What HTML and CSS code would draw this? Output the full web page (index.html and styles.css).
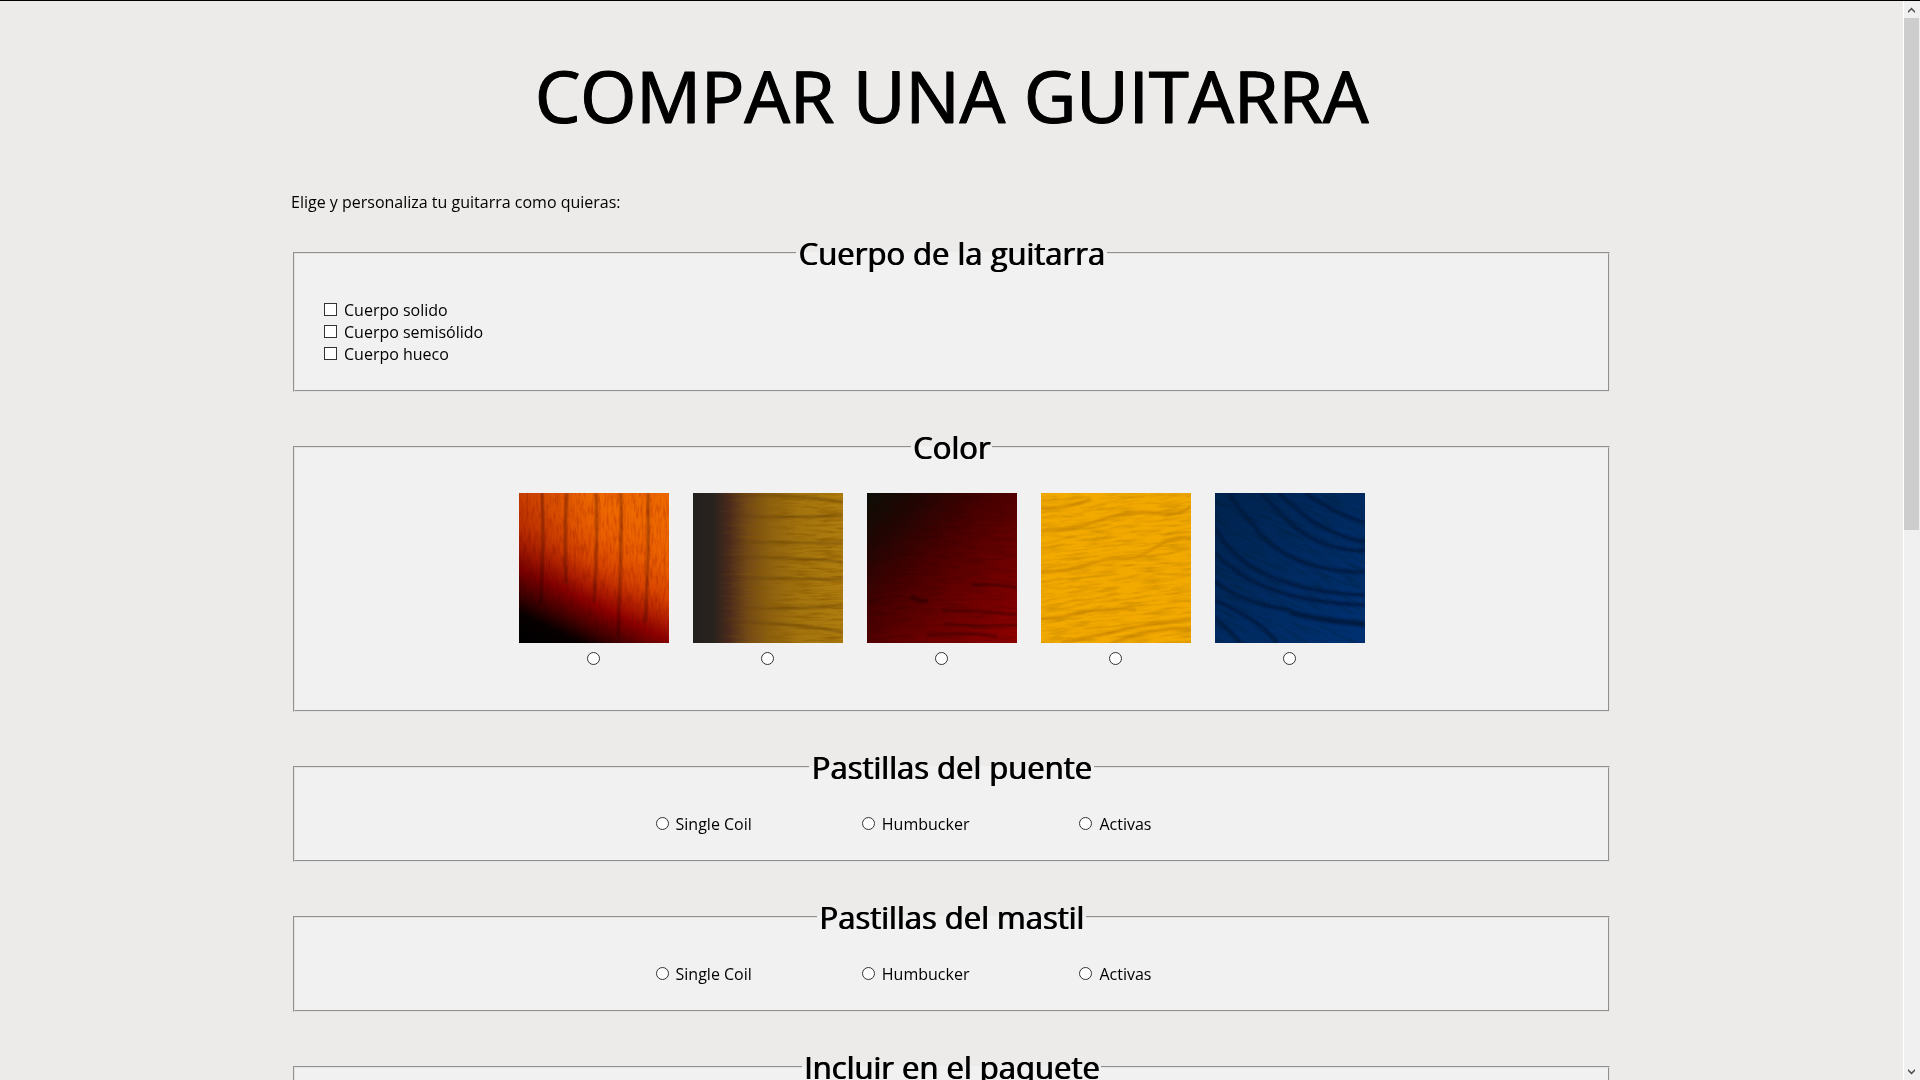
FILE: index.html
```html
<!DOCTYPE html>
<html lang="es">
<head>
<meta charset="utf-8">
<title>Comprar una guitarra</title>
<link rel="stylesheet" href="styles.css">
</head>
<body>
<main class="page">
  <form class="content">
    <h1 class="title">COMPAR UNA GUITARRA</h1>
    <p class="intro">Elige y personaliza tu guitarra como quieras:</p>

    <fieldset class="group">
      <legend>Cuerpo de la guitarra</legend>
      <div class="stack">
        <label class="option"><input type="checkbox" name="cuerpo">Cuerpo solido</label>
        <label class="option"><input type="checkbox" name="cuerpo">Cuerpo semisólido</label>
        <label class="option"><input type="checkbox" name="cuerpo">Cuerpo hueco</label>
      </div>
    </fieldset>

    <fieldset class="group">
      <legend>Color</legend>
      <div class="swatches">
        <label class="swatch">
          <svg viewBox="0 0 150 150" role="img" aria-label="Naranja">
            <defs>
              <linearGradient id="sunburst" gradientUnits="userSpaceOnUse" x1="15" y1="148" x2="82" y2="8">
                <stop offset="0" stop-color="#000"/><stop offset=".12" stop-color="#080000"/><stop offset=".24" stop-color="#4a0000"/><stop offset=".38" stop-color="#8e0000"/><stop offset=".48" stop-color="#b01c00"/><stop offset=".62" stop-color="#d84400"/><stop offset=".8" stop-color="#ea5e00"/><stop offset="1" stop-color="#ee6800"/>
              </linearGradient>
              <linearGradient id="sunburst-side"><stop offset="0" stop-color="#a01800" stop-opacity=".4"/><stop offset=".5" stop-color="#a01800" stop-opacity="0"/></linearGradient>
              <filter id="grain-v" x="0" y="0" width="1" height="1"><feTurbulence type="fractalNoise" baseFrequency=".4 .08" numOctaves="3" seed="4"/><feColorMatrix values="0 0 0 0 .25  0 0 0 0 0  0 0 0 0 0  2 0 0 0 -.85"/></filter>
              <filter id="soft"><feGaussianBlur stdDeviation="1.1"/></filter>
            </defs>
            <rect width="150" height="150" fill="url(#sunburst)"/>
            <rect class="grain" width="150" height="150" fill="url(#sunburst-side)"/>
            <rect class="grain" width="150" height="150" filter="url(#grain-v)" opacity=".3"/>
            <g class="grain" fill="none" stroke="#3a0800" stroke-width="2" filter="url(#soft)" opacity=".5"><path d="M23 0Q25 40 22 110M48 0Q45 50 47 90M77 0Q79 40 75 110M102 0Q103 45 99 145M129 0Q130 70 126 130"/></g>
          </svg>
          <input type="radio" name="color">
        </label>
        <label class="swatch">
          <svg viewBox="0 0 150 150" role="img" aria-label="Ámbar">
            <defs>
              <linearGradient id="amber"><stop offset="0" stop-color="#22211e"/><stop offset=".13" stop-color="#28221e"/><stop offset=".24" stop-color="#49291c"/><stop offset=".36" stop-color="#714817"/><stop offset=".5" stop-color="#8c6010"/><stop offset=".7" stop-color="#a3740e"/><stop offset="1" stop-color="#b07e0f"/></linearGradient>
              <linearGradient id="fade-left"><stop offset=".15" stop-color="#000"/><stop offset=".6" stop-color="#fff"/></linearGradient>
              <mask id="right-only"><rect width="150" height="150" fill="url(#fade-left)"/></mask>
              <filter id="grain-h" x="0" y="0" width="1" height="1"><feTurbulence type="fractalNoise" baseFrequency=".04 .35" numOctaves="4" seed="8"/><feColorMatrix values="0 0 0 0 .25  0 0 0 0 .1  0 0 0 0 0  2.4 0 0 0 -1"/></filter>
            </defs>
            <rect width="150" height="150" fill="url(#amber)"/>
            <g mask="url(#right-only)">
              <rect width="150" height="150" filter="url(#grain-h)" opacity=".7"/>
              <g fill="none" stroke="#50300a" stroke-width="1.4" filter="url(#soft)" opacity=".6"><path d="M20 3Q100 0 150 9M20 22Q90 26 150 22M40 49L150 50M30 65Q90 63 150 69M25 84Q90 86 150 86M30 114Q80 118 150 112M40 129Q100 130 150 139"/></g>
            </g>
          </svg>
          <input type="radio" name="color">
        </label>
        <label class="swatch">
          <svg viewBox="0 0 150 150" role="img" aria-label="Cereza">
            <defs>
              <linearGradient id="cherry" x1="0" y1="0" x2="1" y2="1"><stop offset="0" stop-color="#0c0e06"/><stop offset=".2" stop-color="#230503"/><stop offset=".42" stop-color="#480000"/><stop offset=".65" stop-color="#680000"/><stop offset="1" stop-color="#920000"/></linearGradient>
            </defs>
            <rect width="150" height="150" fill="url(#cherry)"/>
            <rect class="grain" width="150" height="150" filter="url(#grain-h)" opacity=".3"/>
            <g fill="none" stroke="#230000" stroke-width="2" filter="url(#soft)" opacity=".55"><path d="M44 104Q52 109 61 108" stroke-width="4"/><path d="M105 92Q130 90 150 95M75 118Q110 117 150 122M78 131Q110 134 150 132M60 142Q105 138 130 144"/></g>
          </svg>
          <input type="radio" name="color">
        </label>
        <label class="swatch">
          <svg viewBox="0 0 150 150" role="img" aria-label="Amarillo">
            <rect width="150" height="150" fill="#f2a900"/>
            <g transform="rotate(-6 75 75)"><rect x="-15" y="-15" width="180" height="180" filter="url(#grain-h)" opacity=".28"/></g>
            <g fill="none" stroke="#b87500" stroke-width="2" filter="url(#soft)" opacity=".65"><path d="M0 38Q30 38 60 27T115 20T150 13M0 79Q25 79 45 72T80 66T115 54T150 46M0 126Q25 124 45 119T95 117M20 149Q60 142 80 137T150 126M70 150Q110 135 150 135M0 15Q20 18 50 6"/></g>
          </svg>
          <input type="radio" name="color">
        </label>
        <label class="swatch">
          <svg viewBox="0 0 150 150" role="img" aria-label="Azul">
            <defs><linearGradient id="navy" x1="0" y1="0" x2="1" y2="1"><stop offset="0" stop-color="#00234f"/><stop offset="1" stop-color="#003173"/></linearGradient></defs>
            <rect width="150" height="150" fill="url(#navy)"/>
            <g class="grain" transform="rotate(25 75 75)"><rect x="-40" y="-40" width="230" height="230" filter="url(#grain-h)" opacity=".2"/></g>
            <g fill="none" stroke="#001738" stroke-width="3" filter="url(#soft)" opacity=".8"><path d="M14 0C25 20 36 27 42 37C65 65 100 79 150 79M46 0C75 30 95 57 150 58M64 0C85 20 105 40 150 49M90 0Q120 20 150 30M0 34C20 75 70 99 150 102M0 60C30 90 70 109 150 112M0 88Q25 110 75 117"/><path d="M75 119Q100 127 150 131" stroke-width="5"/><path d="M0 107Q50 130 62 150M0 125Q18 140 25 150"/></g>
          </svg>
          <input type="radio" name="color">
        </label>
      </div>
    </fieldset>

    <fieldset class="group">
      <legend>Pastillas del puente</legend>
      <div class="row">
        <label class="option"><input type="radio" name="puente">Single Coil</label>
        <label class="option"><input type="radio" name="puente">Humbucker</label>
        <label class="option"><input type="radio" name="puente">Activas</label>
      </div>
    </fieldset>

    <fieldset class="group">
      <legend>Pastillas del mastil</legend>
      <div class="row">
        <label class="option"><input type="radio" name="mastil">Single Coil</label>
        <label class="option"><input type="radio" name="mastil">Humbucker</label>
        <label class="option"><input type="radio" name="mastil">Activas</label>
      </div>
    </fieldset>

    <fieldset class="group">
      <legend>Incluir en el paquete</legend>
    </fieldset>
  </form>
</main>
<div class="scrollbar" aria-hidden="true">
  <svg class="arrow" viewBox="0 0 7 6"><path d="M0 4L3.500 .5L7 4V6L3.500 2.800L0 6Z"/></svg>
  <div class="track"><div class="thumb"></div></div>
  <svg class="arrow" viewBox="0 0 7 6"><path d="M0 2L3.500 5.500L7 2V0L3.500 3.200L0 0Z"/></svg>
</div>
</body>
</html>
```
FILE: styles.css
```css
* {
  box-sizing: border-box;
}

body {
  display: flex;
  height: 100vh;
  margin: 0;
  border-top: 1px solid #000;
  overflow: hidden;
  background: #ecebe9;
  color: #000;
  font: 16px/22px "Open Sans", sans-serif;
}

.page {
  flex: 1;
  min-width: 0;
  overflow: hidden;
}

.content {
  max-width: 1321px;
  margin: 0 auto;
  padding-top: 45px;
}

.title {
  margin: 0 0 47px;
  font-size: 72px;
  line-height: 98px;
  font-weight: 500;
  text-align: center;
  text-shadow: 1px 0 0 #000;
  -webkit-text-stroke: 1px #000;
}

.intro {
  margin: 0 0 19px;
}

.group {
  margin: 0 2px 34px;
  padding: 25px 29px;
  border: 2px groove #e3e3e3;
  background: #f1f1f1;
}

.group legend {
  margin: 0 auto;
  padding: 0 2px;
  font-size: 31px;
  line-height: 42px;
  font-weight: 500;
  text-shadow: 1px 0 0 #000;
}

.stack {
  display: flex;
  flex-direction: column;
  align-items: flex-start;
}

.option {
  display: flex;
  align-items: center;
  gap: 7px;
}

.row {
  display: flex;
  justify-content: center;
  gap: 110px;
  padding-right: 96px;
}

.swatches {
  display: flex;
  justify-content: center;
  gap: 24px;
  padding: 0 20px 20px 0;
}

.swatch {
  display: flex;
  flex-direction: column;
  align-items: center;
  gap: 9px;
}

.swatch svg {
  display: block;
  width: 150px;
  height: 150px;
}

.grain {
  mix-blend-mode: multiply;
}

input {
  appearance: none;
  width: 13px;
  height: 13px;
  margin: 0;
  border: 1px solid #333;
  background: #fff;
}

.option input {
  margin-bottom: 1px;
}

input[type="radio"] {
  border-radius: 50%;
}

.scrollbar {
  display: flex;
  flex-direction: column;
  align-items: center;
  width: 17px;
  padding-right: 1px;
  border-left: 1px solid #fff;
  background: #f0f0f0;
}

.arrow {
  width: 7px;
  height: 6px;
  margin: 6px 0 5px;
  fill: #505050;
}

.track {
  flex: 1;
  align-self: stretch;
}

.thumb {
  height: 49%;
  background: #cdcdcd;
}
```
